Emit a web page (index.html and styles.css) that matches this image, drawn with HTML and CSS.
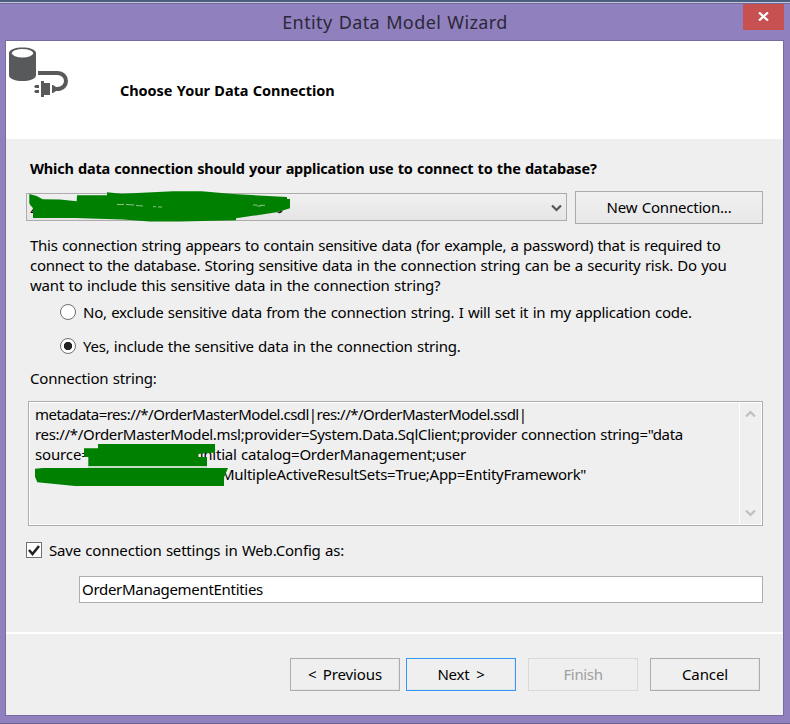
FILE: index.html
```html
<!DOCTYPE html>
<html lang="en">
<head>
<meta charset="utf-8">
<title>Entity Data Model Wizard</title>
<link rel="stylesheet" href="styles.css">
</head>
<body>
<div class="window">
  <header class="titlebar"><h1><span class="t title">Entity Data Model Wizard</span></h1>
    <button class="close" aria-label="Close"><svg width="11" height="9" viewBox="0 0 11 9"><path d="M1 0.5L10 8.5M10 0.5L1 8.5" stroke="#fff" stroke-width="2.3"/></svg></button>
  </header>
  <main class="client">
    <section class="banner">
      <svg class="dbicon" width="62" height="52" viewBox="0 0 62 52">
        <path d="M0 6C0-1.500 27-1.500 27 6V28C27 36 0 36 0 28Z" fill="#58595b"/>
        <ellipse cx="13.500" cy="6.300" rx="10.600" ry="4.200" fill="#fff"/>
        <path d="M29 26H48C60 26 60 42 48 42H46" fill="none" stroke="#58595b" stroke-width="4"/>
        <path d="M32 34H35V36H41V48H35V50H32ZM43 38H44L47 40V44L44 46H43ZM25 39.500L26.500 38H30V41H26.500ZM25 44.500L26.500 43H30V46H26.500Z" fill="#58595b"/>
      </svg>
      <h2><span class="t heading">Choose Your Data Connection</span></h2>
    </section>
    <section class="form">
      <h3 class="question"><span class="t q">Which data connection should your application use to connect to the database?</span></h3>
      <div class="picker">
        <div class="combo"><span class="t">z</span><svg class="arrow" width="11" height="8" viewBox="0 0 11 8"><path d="M1 1.500L5.500 6L10 1.500" fill="none" stroke="#555" stroke-width="2.200"/></svg></div>
        <button class="btn new"><span class="t nc">New Connection...</span></button>
        <svg class="redact" width="264" height="32" viewBox="0 0 264 32"><path d="M251 21.500Q255 24 257 19" fill="#222"/><path d="M3.300 3L10.700 5L16.700 8.300L34 8.500L50.700 10.300L51 4.300H81V1.300L95.700 2.700L147 .3H175.700L207 3L261 6V8H264V17.300L250.700 21.300L210 27.300V29.300L154 30.500H124L97 28.500L49 27H7V17.300L3.300 12.500Z" fill="#008000"/><path d="M91 13.500H98M100 13.500L108 14M110 14.500L117 15M127 15.700H130M132 16H136M227 14H231M231 15H235M234 14.300H239" stroke="#c8dcc8" fill="none" stroke-width=".7"/></svg>
      </div>
      <p class="notice"><span class="t p1">This connection string appears to contain sensitive data (for example, a password) that is required to</span><span class="t p2">connect to the database. Storing sensitive data in the connection string can be a security risk. Do you</span><span class="t p3">want to include this sensitive data in the connection string?</span></p>
      <label class="choice"><i class="radio"></i><span class="t r1">No, exclude sensitive data from the connection string. I will set it in my application code.</span></label>
      <label class="choice second"><i class="radio on"></i><span class="t r2">Yes, include the sensitive data in the connection string.</span></label>
      <div class="label"><span class="t cs">Connection string:</span></div>
      <div class="memo">
        <div class="lines">
          <span class="t m1">metadata=res://*/OrderMasterModel.csdl|res://*/OrderMasterModel.ssdl|</span>
          <span class="t m2">res://*/OrderMasterModel.msl;provider=System.Data.SqlClient;provider connection string="data</span>
          <div class="split"><span class="t m3a">source=</span><span class="t m3">initial catalog=OrderManagement;user</span></div>
          <div class="split last"><span class="t m4">MultipleActiveResultSets=True;App=EntityFramework"</span></div>
        </div>
        <div class="scroll"><svg width="11" height="8" viewBox="0 0 11 8"><path d="M1 6.500L5.500 2L10 6.500" fill="none" stroke="#bfbfbf" stroke-width="2.200"/></svg><svg width="11" height="8" viewBox="0 0 11 8"><path d="M1 1.500L5.500 6L10 1.500" fill="none" stroke="#bfbfbf" stroke-width="2.200"/></svg></div>
        <svg class="redact2" width="195" height="44" viewBox="0 0 195 44"><path d="M53 22H172V24H53Z" fill="#c3dcc3"/><path d="M49 4.300H63V0H180V8.700L172 9L163.500 10V13H172V22H53.300V13H49ZM0 24.700L8 24H193L189 33.300V42H40L2.300 38.300L0 32.700Z" fill="#008000"/></svg>
      </div>
      <label class="save"><i class="check"><svg width="12" height="11" viewBox="0 0 12 11"><path d="M1 5L4.500 9L11 1" fill="none" stroke="#222" stroke-width="2.600"/></svg></i><span class="t sv">Save connection settings in Web.Config as:</span></label>
      <div class="field"><span class="t en">OrderManagementEntities</span></div>
    </section>
    <footer class="actions">
      <button class="btn"><span class="t bp">&lt; Previous</span></button>
      <button class="btn next"><span class="t bn">Next &gt;</span></button>
      <button class="btn off"><span class="t bf">Finish</span></button>
      <button class="btn cancel"><span class="t bc">Cancel</span></button>
    </footer>
  </main>
</div>
</body>
</html>
```

FILE: styles.css
```css
* { box-sizing: border-box; }
body { margin: 0; font: 15px/20px "Noto Sans", sans-serif; color: #000; }
h1, h2, h3, p { margin: 0; font-size: inherit; font-weight: inherit; }
.t { display: inline-block; white-space: nowrap; word-spacing: .7px; }
.window { width: 790px; height: 724px; background: #9180be; border-top: 2px solid #4d5f80; border-bottom: 1px solid #6d6194; padding: 0 6px 7px 5px; }
.titlebar { height: 38px; margin: 0 -6px 0 -5px; border-top: 1px solid #c3c6d6; box-shadow: inset 0 1px #74699c; display: flex; justify-content: center; position: relative; }
.titlebar h1 { font-size: 18px; line-height: 38px; color: #2b2838; }
.close { position: absolute; right: 6px; top: 1px; width: 41px; height: 26px; border: 0; padding: 0 0 1px; background: #c75050; display: flex; align-items: center; justify-content: center; }
.client { height: 676px; border: 1px solid #786ba4; background: #efefef; }
.banner { height: 98px; background: #fff; display: flex; padding: 6px 0 0 3px; }
.banner h2 { margin: 33px 0 0 49px; font-size: 14.5px; font-weight: 700; }
.form { height: 493px; padding: 19px 20px 0 20px; }
.question { padding-left: 4px; font-size: 14.5px; font-weight: 700; }
.picker { display: flex; gap: 8px; margin-top: 13px; position: relative; }
.combo { width: 541px; height: 28px; margin-top: 2px; border: 1px solid #acacac; background: linear-gradient(#f0f0f0, #e5e5e5); padding: 3px 4px 0 3px; display: flex; justify-content: space-between; }
.arrow { margin-top: 7px; }
.redact { position: absolute; left: 0; top: 0; }
.btn { font: inherit; color: #000; height: 33px; width: 110px; padding: 0 0 2px; border: 1px solid #acacac; background: linear-gradient(#f0f0f0, #e8e8e8); }
.btn.new { width: 188px; }
.notice { margin: 11px 0 0 4px; display: flex; flex-direction: column; align-items: flex-start; }
.choice { display: flex; align-items: center; height: 20px; gap: 7px; margin: 7px 0 0 34px; }
.choice.second { margin-top: 14px; }
.radio { width: 16px; height: 16px; border: 1px solid #707070; border-radius: 50%; background: #fff; }
.radio.on { background: radial-gradient(circle, #222 3.8px, #fff 4.5px); }
.label { margin: 12px 0 0 4px; }
.memo { position: relative; margin: 13px 0 0 2px; height: 125px; border: 1px solid #abadb3; box-shadow: inset 0 0 0 1px #fff; display: flex; justify-content: space-between; padding: 1px 2px 1px 1px; }
.lines { padding: 1px 0 0 5px; display: flex; flex-direction: column; align-items: flex-start; }
.split { display: flex; }
.split .m3 { margin-left: 110px; }
.split.last { padding-left: 186px; }
.scroll { width: 21px; border-left: 1px solid #fff; display: flex; flex-direction: column; justify-content: space-between; align-items: center; padding: 7px 0; }
.redact2 { position: absolute; left: 6px; top: 42px; }
.save { display: flex; align-items: center; gap: 7px; margin-top: 14px; height: 20px; }
.check { width: 16px; height: 16px; border: 1px solid #707070; background: #fff; display: flex; align-items: center; justify-content: center; }
.field { height: 27px; margin: 16px 0 0 53px; border: 1px solid #abadb3; background: #fff; padding: 2px; }
.actions { height: 83px; border-top: 2px solid #fff; padding: 24px 23px 0 0; display: flex; justify-content: flex-end; gap: 6px; }
.actions .btn { box-shadow: inset -1px -1px #e5e5e5; background: #efefef; }
.actions .next { border-color: #3399ff; }
.actions .off { margin-left: 6px; color: #a0a0a0; border-color: #d9d9d9; box-shadow: none; }
.cancel { margin-left: 6px; }

/* text tracking */
.title { letter-spacing: .4px; word-spacing: 1px; }
.heading { letter-spacing: -.06px; }
.q { letter-spacing: -.2px; }
.p1 { letter-spacing: -.272px; }
.p2 { letter-spacing: -.245px; }
.p3 { letter-spacing: -.2px; }
.r1 { letter-spacing: -.233px; }
.r2 { letter-spacing: -.235px; }
.cs { letter-spacing: -.2px; }
.m1 { letter-spacing: -.515px; }
.m2 { letter-spacing: -.322px; }
.m3a { letter-spacing: -.14px; }
.m3 { letter-spacing: -.23px; }
.m4 { letter-spacing: -.27px; }
.sv { letter-spacing: -.197px; }
.en { letter-spacing: -.3px; }
.nc { letter-spacing: -.2px; }
.bp { letter-spacing: -.1px; word-spacing: 2.5px; }
.bn { letter-spacing: -.2px; word-spacing: 3px; }
.bf { letter-spacing: -.35px; }
.bc { letter-spacing: -.1px; }
```
